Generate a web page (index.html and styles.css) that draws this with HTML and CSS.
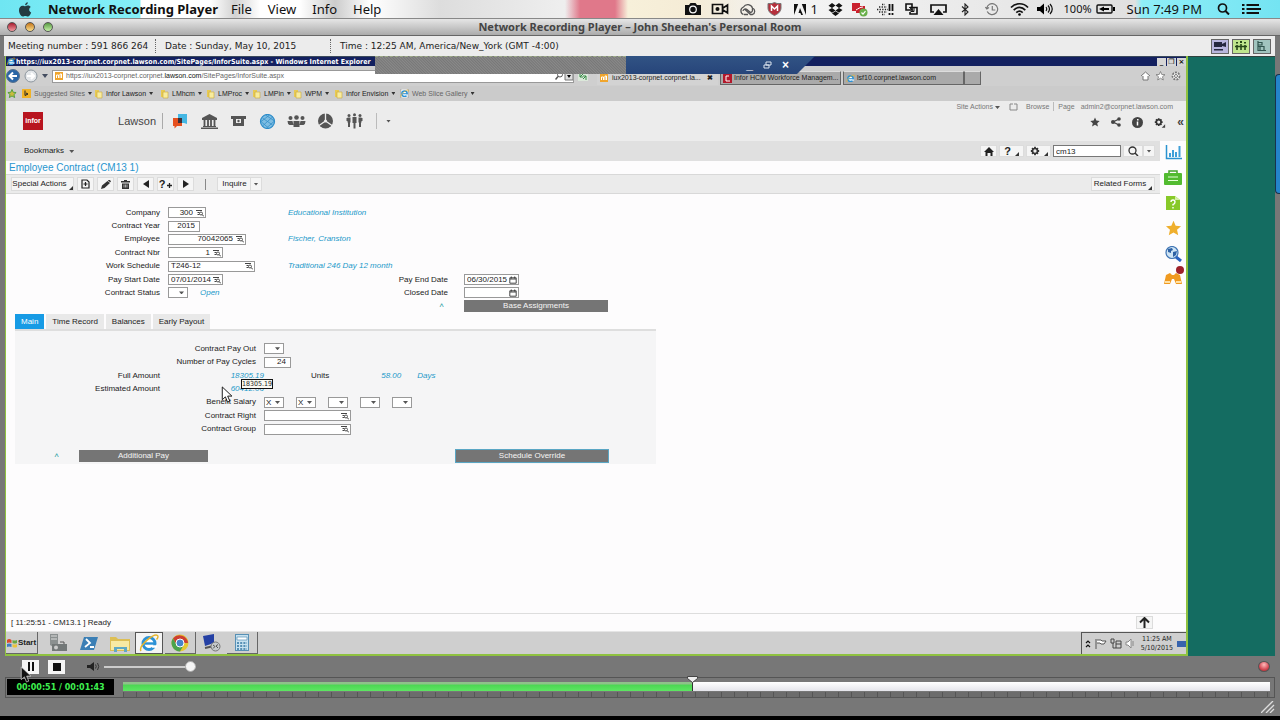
FILE: index.html
```html
<!DOCTYPE html>
<html lang="en">
<head>
<meta charset="utf-8">
<title>Network Recording Player</title>
<link rel="stylesheet" href="styles.css">
</head>
<body>
<svg class="sprite" aria-hidden="true">
  <symbol id="lookup" viewBox="0 0 8 8"><path d="M0 1.5h6M1.500 3.500h2M1.500 5.500h2" stroke="#444" fill="none"/><circle cx="5" cy="4.500" r="1.500" stroke="#333" fill="none" stroke-width=".8"/><path d="M6 5.500l2 2" stroke="#333"/></symbol>
  <symbol id="calendar" viewBox="0 0 8 8"><path d="M.8 1.800h6.400v5.400H.8zM2.300.5v2M5.700.5v2M1 3h6" stroke="#333" fill="none" stroke-width=".9"/></symbol>
  <symbol id="folder" viewBox="0 0 9 10"><path d="M1 1h4v7H1z" fill="#e8ca52"/><path d="M3 3h5v6H3z" fill="#f8ec9d" stroke="#c9a93a" stroke-width=".6"/></symbol>
  <symbol id="ie" viewBox="0 0 20 20"><circle cx="10" cy="10.500" r="6" fill="#fff" stroke="#2b91d6" stroke-width="3"/><path d="M5 10.500h11" stroke="#2b91d6" stroke-width="2.400"/><path d="M13 13.500h5" stroke="#fff" stroke-width="2.500"/><path d="M2 18C-1 13 15 0 18.500 2.500c1 1 0 3-1 4" fill="none" stroke="#e6b52c" stroke-width="1.500"/></symbol>
  <symbol id="star" viewBox="0 0 20 20"><path d="M10 1l2.700 6.200 6.700.6-5 4.500 1.500 6.700-5.900-3.500L4.100 19l1.500-6.700-5-4.500 6.700-.6z"/></symbol>
  <symbol id="gear" viewBox="0 0 12 12"><path d="M6 1v10M1 6h10M2.500 2.500l7 7M9.500 2.500l-7 7" stroke="#333" stroke-width="2.200"/><circle cx="6" cy="6" r="3" fill="#eee" stroke="#333" stroke-width="2"/></symbol>
  <symbol id="infor" viewBox="0 0 8 8"><rect width="8" height="8" fill="#f0a52c"/><path d="M1.500 6V3h2v3M5 6V2h1.500v4" stroke="#fff" fill="none"/></symbol>
  <symbol id="corner" viewBox="0 0 4 4"><path d="M4 0v4H0z" fill="#333"/></symbol>
  <symbol id="pointer" viewBox="0 0 12 18"><path d="M1 1v13.500l3.300-3 2.200 5.500 2.500-1-2.300-5.300h4.500z"/></symbol>
</svg>

<header class="menubar">
  <svg class="apple" viewBox="0 0 14 15"><path d="M9.800.3c.1 1.600-1.200 3-2.700 3C7 1.800 8.300.5 9.800.3zM7.200 4.300c.8 0 1.500-.7 2.800-.7 1.200 0 2.200.6 2.800 1.500-2.300 1.400-2 4.500.4 5.400-.7 2-1.900 4-3.400 4-1 0-1.300-.6-2.500-.6s-1.600.6-2.500.6C3 14.500 1 11.300 1 8.300c0-2.900 1.800-4.500 3.600-4.500 1.200 0 2 .5 2.600.5z" fill="#233b42"/></svg>
  <strong class="app-name">Network Recording Player</strong>
  <nav class="menus"><a href="#">File</a><a href="#">View</a><a href="#">Info</a><a href="#">Help</a></nav>
  <div class="tray">
    <span class="cell"><svg width="18" height="14" viewBox="0 0 18 14"><path d="M1 3h4l1.500-2h5L13 3h4v10H1z" fill="#111"/><circle cx="9" cy="7.500" r="3.300" fill="#111" stroke="#fff" stroke-width="1.200"/></svg></span>
    <span class="cell"><svg width="18" height="12" viewBox="0 0 18 12"><path d="M1.500 1.500h10v9h-10zM12 5l4.500-3v8L12 7" fill="none" stroke="#111" stroke-width="1.700"/><circle cx="6.500" cy="6" r="2" fill="#111"/></svg></span>
    <span class="cell"><svg width="17" height="13" viewBox="0 0 17 13"><path d="M4.500 11.500a4 4 0 010-7.500A5 5 0 0113.500 5a3.500 3.500 0 010 6.500h-2L6 6.500M5 11.500h4M4 8a2.500 2.500 0 014-1.500l3.500 3A2.500 2.500 0 0013 5.500" fill="none" stroke="#555" stroke-width="1.300"/></svg></span>
    <span class="cell"><svg width="15" height="14" viewBox="0 0 15 14"><path d="M1 1.500h4L7.500.5l2.500 1h4V6c0 4-4 6.500-6.500 7.500C5 12.500 1 10 1 6z" fill="#b5303c" stroke="#777"/><path d="M4.500 9V4l3 3 3-3v5" fill="none" stroke="#fff" stroke-width="1.500"/></svg></span>
    <span class="adobe"><svg width="12" height="11" viewBox="0 0 12 11"><path d="M0 0h4.200L0 11zM7.800 0H12v11zM6 4l3 7H7.200l-.8-2H4.500z" fill="#111"/></svg>1</span>
    <span class="cell small"><svg width="15" height="13" viewBox="0 0 15 13"><path d="M4 0l3.500 2.500L4 5 .5 2.800zM11 0L7.500 2.500 11 5l3.500-2.200zM.5 7L4 5l3.500 2.500L4 9.800zM14.500 7L11 5 7.500 7.500 11 9.800zM4 10.500l3.500-2.200 3.500 2.200L7.500 13z" fill="#111"/></svg></span>
    <span class="cell small"><svg width="16" height="15" viewBox="0 0 16 15"><path d="M0 1h8v8H0zM7 4h6v7H4V9z" fill="#c9202d"/><path d="M4 8c2-1 4-3 7-3" stroke="#fff" stroke-width="1" fill="none"/><circle cx="11.500" cy="10.500" r="4" fill="#69b04b"/><path d="M9.500 10.500l1.500 1.700 2.500-3" stroke="#fff" fill="none" stroke-width="1.200"/></svg></span>
    <span class="cell small"><svg width="17" height="13" viewBox="0 0 17 13"><path d="M0 6.500h11M2 4h8M5 1.500h3M2 9h8M5 11.500h3" stroke="#222" stroke-width="1.300" stroke-dasharray="1.300 1.300"/><path d="M12.500 1v7M15.500 1v7M12.500 10v2M15.500 10v2" stroke="#111" stroke-width="1.800"/></svg></span>
    <span class="cell"><svg width="13" height="12" viewBox="0 0 13 12"><path d="M1 1h6v6H1zM5 4.500h7V11H5V9" fill="none" stroke="#111" stroke-width="1.600"/><path d="M4 4l4.500 4M9 5v3.500H5.500" stroke="#111" fill="none"/></svg></span>
    <span class="cell"><svg width="17" height="13" viewBox="0 0 17 13"><path d="M4 9H1V2h15v7h-3" fill="none" stroke="#111" stroke-width="1.700"/><path d="M8.500 6l5 6h-10z" fill="#111"/></svg></span>
    <span class="cell"><svg width="8" height="13" viewBox="0 0 8 13"><path d="M1 3.500l6 5.500-3 3V1l3 3-6 5" fill="none" stroke="#222" stroke-width="1.100"/></svg></span>
    <span class="cell"><svg width="14" height="13" viewBox="0 0 14 13"><path d="M2.200 8.500a5.500 5.500 0 10-.5-3M.3 4l1.500 2L4 4.500M7.300 3v4h3" fill="none" stroke="#777" stroke-width="1.200"/></svg></span>
    <span class="cell"><svg width="19" height="14" viewBox="0 0 19 14"><path d="M1 5.500C5.500.5 13.500.5 18 5.500M3.700 8.200c3.500-3.700 8.100-3.700 11.600 0M6.300 10.700c2-2 4.400-2 6.400 0" fill="none" stroke="#111" stroke-width="1.700"/><circle cx="9.500" cy="12.500" r="1.300"/></svg></span>
    <span class="cell small"><svg width="16" height="12" viewBox="0 0 16 12"><path d="M0 4h3l4-3.500v11L3 8H0z"/><path d="M9 4q1.500 2 0 4M11 2.500q3 3.500 0 7M13 1q4.500 5 0 10" fill="none" stroke="#111" stroke-width="1.200"/></svg></span>
    <span class="percent">100%</span>
    <svg width="19" height="10" viewBox="0 0 19 10"><rect x="1" y="1" width="15" height="8" rx="1" fill="none" stroke="#111" stroke-width="1.400"/><path d="M3 5l5-2.500v1.500h5v2H8v1.500zM17 3h2v4h-2z"/></svg>
    <span class="clock">Sun 7:49 PM</span>
    <svg class="spot" width="13" height="12" viewBox="0 0 13 12"><circle cx="5.500" cy="5" r="4" fill="none" stroke="#111" stroke-width="1.700"/><path d="M8.500 8l3.500 3.500" stroke="#111" stroke-width="2"/></svg>
    <svg width="19" height="12" viewBox="0 0 19 12"><path d="M0 2h2.500M0 6h2.500M0 10h2.500M4.500 2H17M4.500 6H19M4.500 10H17" stroke="#111" stroke-width="2.200"/></svg>
  </div>
</header>

<main class="window">
  <div class="titlebar">
    <div class="lights"><button class="light red" aria-label="Close"></button><button class="light amber" aria-label="Minimize"></button><button class="light green" aria-label="Zoom"></button></div>
    <h1>Network Recording Player – John Sheehan's Personal Room</h1>
  </div>
  <div class="infobar">
    <span class="meeting">Meeting number : 591 866 264</span>
    <span class="date">Date : Sunday, May 10, 2015</span>
    <span class="time">Time : 12:25 AM, America/New_York (GMT -4:00)</span>
    <div class="views">
      <button class="lilac" aria-label="Video"><svg width="14" height="12" viewBox="0 0 14 12"><path d="M1 2h8v5H1zM9 4l4-2v5l-4-1zM1 9h9v1.500H1z" fill="#25273f"/></svg></button>
      <button class="lime" aria-label="Participants"><svg width="12" height="10" viewBox="0 0 12 10"><path d="M2 4v5M6 3v6M10 4v5M0 5.500h12" stroke="#264718" stroke-width="1.600"/><path d="M2 1v1.500M6 0v2M10 1v1.500" stroke="#264718" stroke-width="2"/></svg></button>
      <button class="aqua" aria-label="Chat"><svg width="10" height="10" viewBox="0 0 10 10"><path d="M1 0v9.500h8M1 1.500h4v2.500H1M1 5.500h6V9M3 9V6" fill="none" stroke="#31554f" stroke-width="1.200"/></svg></button>
    </div>
  </div>

  <section class="stage">
    <div class="remote">
      <div class="ie-title"><svg width="10" height="9"><use href="#ie"/></svg><span>https://iux2013-corpnet.corpnet.lawson.com/SitePages/InforSuite.aspx - Windows Internet Explorer</span>
        <div class="ie-buttons"><button>_</button><button>❐</button><button>×</button></div></div>
      <div class="ie-address">
        <svg class="nav-arrows" width="42" height="14" viewBox="0 0 42 14"><circle cx="7" cy="7" r="6.500" fill="#2a66a6" stroke="#59728e"/><path d="M11 7H4M7 3.500L3.500 7 7 10.500" stroke="#fff" stroke-width="2" fill="none"/><circle cx="25" cy="7" r="6" fill="#e3e6e9" stroke="#8d969e"/><path d="M21 7h7M25 4l3 3-3 3" stroke="#fff" stroke-width="2" fill="none"/><path d="M36 5h6l-3 4z" fill="#444d60"/></svg>
        <div class="address"><svg width="8" height="8"><use href="#infor"/></svg><span>https://iux2013-corpnet.corpnet.<b>lawson.com</b>/SitePages/InforSuite.aspx</span>
          <svg class="find" width="18" height="10" viewBox="0 0 18 10"><circle cx="5" cy="3.500" r="2.500" fill="none" stroke="#555"/><path d="M3 5.500L.5 8.500" stroke="#555" stroke-width="1.500"/><path d="M10 0h8v9h-8z" fill="#ddd" stroke="#777"/><path d="M12 4h4l-2 3z"/></svg></div>
        <svg class="reload" width="10" height="9" viewBox="0 0 10 9"><path d="M0 0h10v9H0z" fill="#dbe8da"/><path d="M2 1v4h3M2 5l3-3M8 8V4H5M8 4L5 7" stroke="#368a46" fill="none"/></svg>
        <div class="ie-tabs">
          <a class="ie-tab on" href="#"><svg width="8" height="8"><use href="#infor"/></svg><span>iux2013-corpnet.corpnet.la...</span><b>✖</b></a>
          <a class="ie-tab" href="#"><svg width="9" height="9" viewBox="0 0 9 9"><path d="M0 0h9v9H0z" fill="#b3182b"/><path d="M3 2v5h4M3 2h3" stroke="#fff" fill="none"/></svg><span>Infor HCM Workforce Managem...</span></a>
          <a class="ie-tab" href="#"><svg width="9" height="9"><use href="#ie"/></svg><span>lsf10.corpnet.lawson.com</span></a>
          <a class="ie-tab stub" href="#" aria-label="New tab"></a>
        </div>
        <svg class="ie-tools" width="40" height="10" viewBox="0 0 40 10"><path d="M0 5l4.500-4L9 5M2 5v4h5V5" fill="#fff" stroke="#777"/><path d="M19.500.5l1.300 3 3.200.2-2.500 2 .8 3.300-2.800-1.800L16.700 9l.8-3.300-2.500-2 3.200-.2z" fill="#fff" stroke="#777" stroke-width=".8"/><circle cx="35" cy="5" r="3.500" fill="#fff" stroke="#777" stroke-width="1.800" stroke-dasharray="2 1"/><circle cx="35" cy="5" r="1.500" fill="none" stroke="#777"/></svg>
      </div>
      <nav class="favorites">
        <svg width="10" height="9" viewBox="0 0 20 20" fill="#c8bb3d" stroke="#4a9c3a" stroke-width="2"><use href="#star"/></svg>
        <a class="wide faded" href="#"><svg width="9" height="9" viewBox="0 0 9 9"><path d="M0 0h9v9H0z" fill="#f0b226"/><path d="M3 1.500v5l3-1.500-2-1" stroke="#222" fill="none"/></svg>Suggested Sites<i></i></a>
        <a class="f2" href="#"><svg width="9" height="10"><use href="#folder"/></svg>Infor Lawson<i></i></a>
        <a class="f3" href="#"><svg width="9" height="10"><use href="#folder"/></svg>LMhcm<i></i></a>
        <a class="f3" href="#"><svg width="9" height="10"><use href="#folder"/></svg>LMProc<i></i></a>
        <a class="f4" href="#"><svg width="9" height="10"><use href="#folder"/></svg>LMPin<i></i></a>
        <a class="f4" href="#"><svg width="9" height="10"><use href="#folder"/></svg>WPM<i></i></a>
        <a class="f2" href="#"><svg width="9" height="10"><use href="#folder"/></svg>Infor Envision<i></i></a>
        <a class="faded" href="#"><svg width="9" height="9" viewBox="0 0 20 20"><path d="M2 0h16v20H2z" fill="#fff" stroke="#777"/><use href="#ie"/></svg>Web Slice Gallery<i></i></a>
      </nav>

      <div class="app-head">
        <div class="brand"><span class="logo">infor</span><span class="product">Lawson</span></div>
        <nav class="apps">
          <svg width="15" height="15" viewBox="0 0 15 15"><path d="M5 0h9v10l-3-1H5z" fill="#45b7e3"/><path d="M0 4h9v8H4l-2.500 2.500V12H0z" fill="#e6501e"/><path d="M5 4h4v5H5z" fill="#3d2f37"/></svg>
          <svg width="17" height="15" viewBox="0 0 17 15"><path d="M8.500 0L16 4v2H1V4zM2 12h13v1H2zM0 13.500h17V15H0z" fill="#555"/><path d="M3.500 6v6M7 6v6M10 6v6M13.500 6v6" stroke="#555" stroke-width="1.800"/></svg>
          <svg width="15" height="12" viewBox="0 0 15 12"><path d="M0 1h15v3h-2v7H2V4H0z" fill="#555"/><path d="M5 4h5v4H5z" fill="#eee"/><circle cx="7.500" cy="6" r="1.200" fill="#555"/></svg>
          <svg width="16" height="15" viewBox="0 0 16 15"><circle cx="8" cy="7.500" r="7" fill="#7ebde2" stroke="#2d8cc9" stroke-width="1.200"/><path d="M3 4l10 7M2 8l7 6M6 1l9 6M13 3L3 12M10 1L1 8M15 7l-8 7" stroke="#338fc9" stroke-width=".8"/></svg>
          <svg width="18" height="12" viewBox="0 0 18 12"><circle cx="3" cy="3" r="2"/><circle cx="9" cy="2.500" r="2.300"/><circle cx="15" cy="3" r="2"/><path d="M0 6h5l1 4H2q-2-1-2-4M6 6h6v6H6zM13 6h5q0 3-2 4h-4z"/></svg>
          <svg width="17" height="16" viewBox="0 0 17 16"><circle cx="8.500" cy="8" r="7.500"/><path d="M8.500 0v8M8.500 8L2 12.500M8.500 8l6.500 4.500" stroke="#eee" stroke-width="1.300"/><circle cx="8.500" cy="8" r="1.500" fill="#eee"/></svg>
          <svg width="16" height="16" viewBox="0 0 16 16"><circle cx="2.500" cy="2.500" r="1.500"/><circle cx="8" cy="1.700" r="1.500"/><circle cx="13.500" cy="2.500" r="1.500"/><path d="M1 4.500h3v5H3.500V14h-2V9.500H1zM6 4h4v6H9v5.500H7V10H6zM12 4.500h3v5h-.5V14h-2V9.500H12zM0 5h1v3H0zM15 5h1v3h-1z"/></svg>
        </nav>
        <i class="caret more"></i>
        <div class="head-right">
          <div class="site"><span>Site Actions <i class="caret"></i></span><svg width="9" height="8" viewBox="0 0 9 8"><path d="M4 1H1v6h7V4M5 1h3v3" fill="none" stroke="#888"/></svg><span class="ribbon">Browse</span><span class="ribbon">Page</span><span class="user">admin2@corpnet.lawson.com</span></div>
          <div class="tools">
            <svg width="10" height="10"><use href="#star"/></svg>
            <svg width="10" height="10" viewBox="0 0 10 10"><path d="M8 2L2 5l6 3" stroke="#444" stroke-width="1.300" fill="none"/><circle cx="8" cy="2" r="1.800"/><circle cx="2" cy="5" r="2"/><circle cx="8" cy="8" r="1.800"/></svg>
            <svg width="11" height="11" viewBox="0 0 11 11"><circle cx="5.500" cy="5.500" r="5.500"/><path d="M5.800 2v1.500M5.500 4.500v4" stroke="#fff" stroke-width="1.500"/></svg>
            <svg width="12" height="11" viewBox="0 0 14 12"><use href="#gear" width="11" height="11"/><path d="M13 8v4H9z"/></svg>
            <b>«</b>
          </div>
        </div>
      </div>

      <div class="workspace">
        <div class="page">
          <div class="bookmarks">
            <a href="#">Bookmarks <i class="caret"></i></a>
            <form class="search">
              <button type="button" class="btn" aria-label="Home"><svg width="10" height="9" viewBox="0 0 10 9"><path d="M5 0l5 5H8.500v4h-2V6h-3v3h-2V5H0z" fill="#222"/></svg></button>
              <button type="button" class="btn big" aria-label="Help"><b>?</b><svg width="4" height="4"><use href="#corner"/></svg></button>
              <button type="button" class="btn big" aria-label="Settings"><svg width="10" height="10"><use href="#gear"/></svg><svg width="4" height="4"><use href="#corner"/></svg></button>
              <input aria-label="Search" value="cm13">
              <button type="button" class="btn find-btn" aria-label="Find"><svg width="11" height="10" viewBox="0 0 11 10"><circle cx="4.500" cy="4.500" r="3.500" fill="none" stroke="#333" stroke-width="1.300"/><path d="M7 7l3 3" stroke="#333" stroke-width="1.500"/></svg></button><button type="button" class="btn drop" aria-label="Search options"><i class="caret"></i></button>
            </form>
          </div>
          <h2>Employee Contract (CM13 1)</h2>
          <div class="toolbar">
            <button class="btn text">Special Actions<svg width="4" height="4"><use href="#corner"/></svg></button>
            <button class="btn" aria-label="Add"><svg width="9" height="10" viewBox="0 0 9 10"><path d="M1 1h5l2 2v6H1z" fill="none" stroke="#222" stroke-width="1.200"/><path d="M4.500 3v4M2.500 5h4" stroke="#222" stroke-width="1.200"/></svg></button>
            <button class="btn" aria-label="Edit"><svg width="10" height="9" viewBox="0 0 10 9"><path d="M0 9l1-3.500L6.500 1l2.500 2L3.500 8zM7.500 0h1.500l1 1.500-.8.800L7 .8z" fill="#333"/></svg></button>
            <button class="btn" aria-label="Delete"><svg width="9" height="9" viewBox="0 0 9 9"><path d="M0 1h3V0h3v1h3v1.500H0zM1 3.500h7V9H1z" fill="#333"/><path d="M3 4.500v3M4.500 4.500v3M6 4.500v3" stroke="#ddd" stroke-width=".7"/></svg></button>
            <button class="btn" aria-label="Previous"><svg width="6" height="8" viewBox="0 0 6 8"><path d="M6 0v8L0 4z" fill="#222"/></svg></button>
            <button class="btn" aria-label="Inquire help"><b>?</b><svg width="5" height="5" viewBox="0 0 5 5"><path d="M2.500 0v5M0 2.500h5" stroke="#222" stroke-width="1.300"/></svg></button>
            <button class="btn" aria-label="Next"><svg width="6" height="8" viewBox="0 0 6 8"><path d="M0 0v8l6-4z" fill="#222"/></svg></button>
            <span class="rule"></span>
            <div class="split"><button class="btn inquire">Inquire</button><button class="btn drop" aria-label="Inquire options"><i class="caret"></i></button></div>
            <button class="btn text related">Related Forms<svg width="4" height="4"><use href="#corner"/></svg></button>
          </div>

          <div class="content">
            <form class="contract">
              <label for="company">Company</label><div class="field w38"><input id="company" class="num" value="300"><svg width="8" height="8"><use href="#lookup"/></svg></div><em>Educational Institution</em><i></i>
              <label for="year">Contract Year</label><div class="field w32"><input id="year" class="num" value="2015"></div><i></i><i></i>
              <label for="employee">Employee</label><div class="field w78"><input id="employee" class="num" value="70042065"><svg width="8" height="8"><use href="#lookup"/></svg></div><em>Fischer, Cranston</em><i></i>
              <label for="nbr">Contract Nbr</label><div class="field w54"><input id="nbr" class="num" value="1"><svg width="8" height="8"><use href="#lookup"/></svg></div><i></i><i></i>
              <label for="schedule">Work Schedule</label><div class="field w87"><input id="schedule" value="T246-12"><svg width="8" height="8"><use href="#lookup"/></svg></div><em>Traditional 246 Day 12 month</em><i></i>
              <label for="start">Pay Start Date</label><div class="field w54"><input id="start" value="07/01/2014"><svg width="8" height="8"><use href="#lookup"/></svg></div><label for="end">Pay End Date</label><div class="field w54 second"><input id="end" value="06/30/2015"><svg width="8" height="8"><use href="#calendar"/></svg></div>
              <label for="status">Contract Status</label><div class="row"><span class="pick"><select id="status"><option></option></select><i class="caret"></i></span><em>Open</em></div><label for="closed">Closed Date</label><div class="field w54 second"><input id="closed"><svg width="8" height="8"><use href="#calendar"/></svg></div>
              <i></i><i></i><span class="hat">˄</span><button type="button" class="action second">Base Assignments</button>
            </form>

            <nav class="tabs"><button class="on">Main</button><button>Time Record</button><button>Balances</button><button>Early Payout</button></nav>
            <form class="panel">
              <div class="grid">
                <i></i><label for="payout">Contract Pay Out</label><span class="pick"><select id="payout"><option></option></select><i class="caret"></i></span>
                <i></i><label for="cycles">Number of Pay Cycles</label><div class="field w26"><input id="cycles" class="num" value="24"></div>
                <span class="lab">Full Amount</span><em class="value">18305.19</em><div class="row units"><span>Units</span><em class="value">58.00</em><em>Days</em></div>
                <span class="lab">Estimated Amount</span><em class="value">60412.06</em><i></i>
                <i></i><label for="b1">Benefit Salary</label><div class="row"><span class="pick"><select id="b1"><option>X</option></select><i class="caret"></i></span><span class="pick"><select aria-label="Benefit salary 2"><option>X</option></select><i class="caret"></i></span><span class="pick"><select aria-label="Benefit salary 3"><option></option></select><i class="caret"></i></span><span class="pick"><select aria-label="Benefit salary 4"><option></option></select><i class="caret"></i></span><span class="pick"><select aria-label="Benefit salary 5"><option></option></select><i class="caret"></i></span></div>
                <i></i><label for="right">Contract Right</label><div class="field w87"><input id="right"><svg width="8" height="8"><use href="#lookup"/></svg></div>
                <i></i><label for="group">Contract Group</label><div class="field w87"><input id="group"><svg width="8" height="8"><use href="#lookup"/></svg></div>
              </div>
              <div class="actions"><span class="hat">˄</span><button type="button" class="action pay">Additional Pay</button><button type="button" class="action override">Schedule Override</button></div>
              <span class="tip">18305.19</span>
              <svg class="arrow" width="12" height="17" fill="#fff" stroke="#111"><use href="#pointer"/></svg>
            </form>
          </div>
        </div>
        <aside class="side">
          <svg width="17" height="15" viewBox="0 0 17 15"><path d="M1.500 0v13.500H17" fill="none" stroke="#2a92d0" stroke-width="1.500"/><path d="M5 12V8M8 12V5M11 12V7M14.500 12V1" stroke="#3f9fd8" stroke-width="2"/></svg>
          <svg width="18" height="15" viewBox="0 0 18 15"><path d="M5 4V1h8v3" fill="none" stroke="#43a32a" stroke-width="1.500"/><rect y="3" width="18" height="12" rx="1" fill="#52bb30"/><path d="M4 7h10M4 10.500h10" stroke="#e2ffd5"/></svg>
          <svg width="14" height="15" viewBox="0 0 14 15"><path d="M0 1h9l5 4v10H0z" fill="#88c929"/><path d="M9 1v4h5" fill="#d4f0a7"/><path d="M5 7q0-2 2-2t2 2-2 2.500v1M7 12v1.500" fill="none" stroke="#fff" stroke-width="1.400"/></svg>
          <svg width="17" height="16" viewBox="0 0 20 20" fill="#efaf2d"><use href="#star"/></svg>
          <svg width="17" height="16" viewBox="0 0 17 16"><circle cx="7" cy="6.500" r="6" fill="#cfe4f4" stroke="#3f75b4" stroke-width="1.200"/><path d="M3 3l4-1 1 2-2 1v2l-3-1zM8 6l4-1-1 4-3 2z" fill="#2d61a4"/><path d="M11 11l5 4" stroke="#2862bf" stroke-width="3"/></svg>
          <svg class="binoculars" width="22" height="19" viewBox="0 0 22 19"><path d="M2 18l2-9 4-2 2 2h2l2-2 4 2 2 9h-6l-2-5h-2l-2 5z" fill="#f09a20"/><path d="M3 16h5M14 16h5" stroke="#ffe1a5" stroke-width="2"/><circle cx="18" cy="4" r="4" fill="#9e2029"/></svg>
        </aside>
      </div>
      <div class="status"><span>[ 11:25:51 - CM13.1 ] Ready</span><button class="btn up" aria-label="Top"><svg width="11" height="11" viewBox="0 0 11 11"><path d="M5.500 11V1M1 5.500L5.500 1 10 5.500" fill="none" stroke="#222" stroke-width="2"/></svg></button></div>
      <div class="taskbar">
        <button class="start"><svg width="10" height="10" viewBox="0 0 10 10"><path d="M0 2q2-2 4.500 0v3Q2 4 0 5z" fill="#dc4a2c"/><path d="M5.500 2q2 1 4.500 0v3q-2 1-4.500 0z" fill="#69a843"/><path d="M0 6q2-1 4.500 0v3Q2 8 0 9z" fill="#417cc0"/><path d="M5.500 6q2 1 4.500 0v3q-2 1-4.500 0z" fill="#ecc33a"/></svg>Start</button>
        <button class="task" aria-label="Server Manager"><svg width="20" height="18" viewBox="0 0 20 18"><path d="M2 0h8v12l-3 2-5-3z" fill="#8b9090"/><path d="M3 2h6M3 5h6" stroke="#ddd"/><path d="M4 10h15v7H4z" fill="#737878"/><circle cx="8" cy="13.500" r="2" fill="#ccc"/><path d="M12 8h4v2" stroke="#555" fill="none"/></svg></button>
        <button class="task" aria-label="PowerShell"><svg width="18" height="15" viewBox="0 0 18 15"><path d="M4 1h14l-4 13H0z" fill="#3b7fb5"/><path d="M6 3l4 4-5 4M10 11h4" fill="none" stroke="#fff" stroke-width="1.800"/></svg></button>
        <button class="task" aria-label="Explorer"><svg width="20" height="17" viewBox="0 0 20 17"><path d="M0 2h6l2 2h12v12H0z" fill="#ddbf55"/><path d="M1 6h18v9H1z" fill="#f7eaa3"/><path d="M4 17v-5h13v5h-3v-3H7v3z" fill="#5fa9c4"/></svg></button>
        <button class="task active" aria-label="Internet Explorer"><svg width="20" height="20"><use href="#ie"/></svg></button>
        <button class="task raised" aria-label="Chrome"><svg width="18" height="18" viewBox="0 0 18 18"><circle cx="9" cy="9" r="8.500" fill="#e6c832"/><path d="M9 9H17A8.500 8.500 0 002 4.300L5.500 11z" fill="#ce3f32"/><path d="M2 4.300A8.500 8.500 0 009 17.500l4-7-7 1z" fill="#4ba34b"/><circle cx="9" cy="9" r="4" fill="#4784c8" stroke="#fff"/></svg></button>
        <button class="task" aria-label="Remote Desktop"><svg width="19" height="18" viewBox="0 0 19 18"><path d="M1 2l11-2v9L3 12z" fill="#2440a4"/><path d="M3 14l9-2" stroke="#555" stroke-width="2"/><circle cx="13.500" cy="12.500" r="4.500" fill="#c6cacc" stroke="#777"/><path d="M11 11l2 1.500-2 2M16 10.500L14 12l2 2" stroke="#555" fill="none"/></svg></button>
        <button class="task raised" aria-label="Calculator"><svg width="14" height="17" viewBox="0 0 14 17"><rect x=".5" y=".5" width="13" height="16" fill="#c7e1ef" stroke="#5790b5"/><path d="M2 3h10v3H2z" fill="#fff" stroke="#5790b5" stroke-width=".7"/><path d="M2 9h10M2 12h10M2 15h10" stroke="#5790b5" stroke-width="1.800" stroke-dasharray="2 1.200"/></svg></button>
        <div class="systray"><svg width="52" height="12" viewBox="0 0 52 12"><path d="M1 5l2-2 2 2M1 9l2-2 2 2" fill="none" stroke="#111" stroke-width="1.200"/><path d="M11 11V1M12 2h4l1 1h4l-2 3h-3l-1-1h-3" fill="#fff" stroke="#555"/><path d="M26 1v4h3V1zM28 5v5h3M31 3h5v7h-5zM31 6h5" fill="none" stroke="#444"/><path d="M41 4h2l3-3v9l-3-3h-2zM48 3v5" fill="#fff" stroke="#888"/></svg><time>11:25 AM<br>5/10/2015</time><i></i></div>
      </div>
      <div class="float"><span class="noise"></span><span class="float-blue"><b>_</b><svg width="9" height="8" viewBox="0 0 9 8"><path d="M3 1h5v3H3zM1 4h5v3H1z" fill="#23406f" stroke="#dde6f2"/></svg><b>×</b></span></div>
    </div>
    <div class="desktop"></div>
    <span class="edge"></span>
  </section>

  <div class="controls">
    <button class="ctl" aria-label="Pause"><svg width="6" height="9" viewBox="0 0 6 9"><path d="M1 0v9M5 0v9" stroke="#111" stroke-width="2"/></svg></button>
    <button class="ctl" aria-label="Stop"><svg width="8" height="8"><rect width="8" height="8" fill="#111"/></svg></button>
    <svg class="speaker" width="13" height="9" viewBox="0 0 13 9"><path d="M0 3h3l4-3v9L3 6H0z" fill="#222"/><path d="M8.500 2.500q1.500 2 0 4M10.500 1q2.500 3.500 0 7" fill="none" stroke="#333"/></svg>
    <input class="volume" type="range" aria-label="Volume" min="0" max="100" value="100">
    <span class="record"></span>
    <svg class="arrow2" width="12" height="17" fill="#111" stroke="#ddd" stroke-width=".7"><use href="#pointer"/></svg>
  </div>
  <div class="timeline">
    <output>00:00:51 / 00:01:43</output>
    <div class="track-wrap"><div class="track"><div class="played" style="width:49.7%"><svg width="11" height="7" viewBox="0 0 11 7"><path d="M.5.5h10v2l-5 4-5-4z" fill="#eee" stroke="#444"/></svg></div></div><div class="ticks"></div></div>
  </div>
  <footer class="foot"><svg width="14" height="12" viewBox="0 0 14 12"><path d="M0 12L12 0M5 12l8-8M9 12l4-4" stroke="#ddd" stroke-width="1.300"/></svg></footer>
</main>
</body>
</html>
```
FILE: styles.css
```css
* { box-sizing: border-box; }
body { margin: 0; min-height: 100vh; display: flex; flex-direction: column; background: #000; padding-bottom: 4px; font: 8px/10px "Liberation Sans", Arial, sans-serif; color: #222; }
button, input, select { font: inherit; color: inherit; margin: 0; padding: 0; border: 0; border-radius: 0; }
a { color: inherit; text-decoration: none; }
svg { flex: none; display: block; }
i { font-style: normal; }
.sprite { position: absolute; width: 0; height: 0; }
.caret { display: inline-block; flex: none; width: 5px; height: 3px; background: #555; clip-path: polygon(0 0, 100% 0, 50% 100%); }

/* System menu bar */
.menubar { height: 18px; display: flex; align-items: center; padding: 0 19px 0 18px; font: 13px/18px "Noto Sans", sans-serif; color: #111; background: linear-gradient(90deg, #6fe6f2 0, #85f0f8 140px, transparent 141px), linear-gradient(270deg, #74e4f2 0, #8feef8 138px, transparent 145px), linear-gradient(90deg, transparent 565px, #e0788a 580px, #e0788a 615px, #f7f0da 628px, #f5ecd6 690px, transparent 780px), linear-gradient(90deg, #fff 0, #fff 210px, #d2d2d2 235px, #fff 260px, #fff 300px, #ccc 335px, #fff 370px, #ddd 440px, #eee 560px, #f4f4f4 800px, #d8d8d8); }
.apple { width: 14px; height: 15px; }
.app-name { margin-left: 16px; width: 183px; white-space: nowrap; }
.menus { display: flex; gap: 16px; }
.tray { margin-left: auto; display: flex; align-items: center; }
.cell { width: 27px; display: flex; justify-content: center; }
.cell.small { width: 25px; }
.adobe { width: 35px; display: flex; align-items: center; gap: 5px; padding-left: 6px; }
.percent { font-size: 11px; margin: 0 4px 0 6px; }
.clock { margin: 0 15px 0 12px; }
.spot { margin-right: 12px; }

/* Player window */
.window { flex: 1; display: flex; flex-direction: column; background: #777; }
.titlebar { height: 18px; display: grid; grid-template-columns: 60px 1fr 60px; align-items: center; background: linear-gradient(#e6e6e6, #ababab); border-top: 1px solid #888; border-bottom: 1px solid #666; }
.lights { display: flex; gap: 8px; padding-left: 7px; }
.light { width: 10px; height: 10px; border-radius: 50%; border: 1px solid #555; }
.red { background: linear-gradient(#a81c2e, #f39aa0); }
.amber { background: linear-gradient(#c5761a, #fbe08f); }
.green { background: linear-gradient(#579a42, #c6f1a8); }
h1 { margin: 0; text-align: center; font: bold 11px/16px "Noto Sans", sans-serif; color: #444; white-space: nowrap; }
.infobar { height: 20px; margin: 0 5px 0 4px; display: flex; align-items: center; background: #ececec; font: 9px/18px "DejaVu Sans", sans-serif; color: #222; }
.infobar > span { white-space: nowrap; line-height: 14px; }
.meeting { width: 152px; padding-left: 4px; border-right: 1px dotted #666; }
.date { width: 175px; padding-left: 9px; border-right: 1px dotted #666; }
.time { padding-left: 9px; }
.views { margin-left: auto; display: flex; gap: 3px; padding-right: 4px; }
.views button { width: 18px; height: 15px; border: 1px solid #666; display: flex; align-items: center; justify-content: center; }
.lilac { background: #b9b6de; } .lime { background: #bfe58d; } .aqua { background: #a1c4bf; }

.stage { flex: 1; display: flex; position: relative; padding: 0 5px; }
.remote { flex: 1; min-width: 0; display: flex; flex-direction: column; position: relative; border: solid #8fc240; border-width: 0 2px 2px 1px; background: #fdfcfd; }
.desktop { width: 87px; background: #146c61; border-top: 1px solid #30433f; }
.edge { position: absolute; right: 0; top: 18px; width: 5px; height: 120px; background: #2484cc; border: 1px solid #17334d; border-right: 0; border-radius: 4px 0 0 4px; }

/* Browser chrome */
.ie-title { height: 10px; display: flex; align-items: center; background: #13205f; color: #fff; font: bold 7px/10px "DejaVu Sans Condensed", "DejaVu Sans", sans-serif; white-space: nowrap; border-top: 1px solid #3b4a5c; }
.ie-buttons { margin-left: auto; display: flex; gap: 1px; }
.ie-buttons button { width: 9px; height: 8px; background: #d6d6d6; color: #111; font: bold 7px/6px "DejaVu Sans", sans-serif; }
.ie-address { height: 20px; display: flex; align-items: center; background: #cfcfcf; font: 7px/10px "Liberation Sans", sans-serif; }
.address { margin-left: 4px; width: 522px; height: 13px; display: flex; align-items: center; gap: 3px; padding-left: 2px; background: #fff; border: 1px solid #999; color: #666; white-space: nowrap; }
.address b { font-weight: normal; color: #111; }
.find { margin-left: auto; }
.reload { margin: 0 9px 0 4px; }
.ie-tabs { display: flex; gap: 2px; align-self: flex-end; min-width: 0; padding-bottom: 1px; }
.ie-tab { width: 121px; height: 14px; display: flex; align-items: center; gap: 2px; padding-left: 2px; background: #aaa; border: 1px solid #666; border-top-color: #ddd; white-space: nowrap; }
.ie-tab span { flex: 1; }
.ie-tab.on { background: #d3d3d3; border-color: #d3d3d3; padding-right: 4px; gap: 4px; }
.ie-tab.stub { width: 17px; margin-left: -2px; }
.ie-tools { margin: 0 5px 0 auto; }
.favorites { height: 15px; display: flex; align-items: center; padding-left: 1px; background: #cbcbcb; font: 7px/10px "Liberation Sans", sans-serif; white-space: nowrap; }
.favorites a { display: flex; align-items: center; gap: 3px; }
.favorites a i { width: 4px; height: 3px; background: #333; clip-path: polygon(0 0, 100% 0, 50% 100%); }
.favorites > svg { margin-right: 5px; }
.faded { color: #666; }
.wide { width: 72px; } .f2 { width: 66px; } .f3 { width: 46px; } .f4 { width: 41px; }

/* Portal header */
.app-head { height: 40px; display: flex; align-items: center; background: #ececec; }
.brand { display: flex; align-items: center; justify-content: space-between; width: 157px; height: 16px; padding: 0 6px 0 17px; border-right: 1px solid #aaa; }
.logo { width: 20px; height: 18px; background: #b8141f; color: #fff; font: bold 7px/17px "Liberation Sans", sans-serif; text-align: center; }
.product { font-size: 11px; line-height: 16px; color: #444; }
.apps { display: flex; align-items: center; width: 214px; height: 16px; padding-left: 3px; border-right: 1px solid #bbb; fill: #555; }
.apps svg { width: 29px; }
.more { margin-left: 9px; }
.head-right { margin-left: auto; align-self: stretch; }
.site { display: flex; align-items: center; height: 11px; padding-right: 13px; color: #777; font-size: 7px; line-height: 9px; white-space: nowrap; }
.site svg { margin: 0 4px 0 9px; }
.ribbon { padding: 0 4px; }
.ribbon + .ribbon { border-left: 1px solid #bbb; }
.user { margin-left: 2px; }
.tools { display: flex; align-items: center; justify-content: flex-end; gap: 11px; padding: 4px 2px 0 0; fill: #444; }
.tools b { font-size: 12px; line-height: 12px; color: #444; }

.workspace { flex: 1; display: flex; min-height: 0; }
.page { flex: 1; min-width: 0; }
.side { width: 26px; display: flex; flex-direction: column; align-items: center; gap: 10px; padding-top: 4px; }
.binoculars { margin-top: -6px; }
.bookmarks { height: 20px; display: flex; align-items: center; justify-content: space-between; padding: 0 5px 0 18px; background: #e0e0e0; }
.bookmarks a .caret { margin-left: 3px; }
.search { display: flex; gap: 2px; }
.search input { width: 68px; height: 12px; border: 1px solid #777; background: #fff; padding: 0 2px; }
.btn { width: 17px; height: 12px; display: flex; align-items: center; justify-content: center; gap: 2px; background: #f5f5f5; border: 1px solid #dcdcdc; }
.btn b { font-size: 11px; line-height: 10px; }
.btn > svg + svg, .btn > b + svg, .text svg { align-self: flex-end; }
.toolbar .btn svg:last-child:not(:only-child) { margin-bottom: 2px; }
.big { width: 25px; gap: 4px; }
.find-btn { width: 20px; }
.btn.drop { width: 12px; margin-left: -2px; }
h2 { margin: 0; padding-left: 3px; font-size: 10px; line-height: 13px; font-weight: normal; color: #2796cf; }
.toolbar { height: 20px; display: flex; align-items: center; gap: 3px; padding: 0 5px; background: #ebebeb; border: solid #d8d8d8; border-width: 1px 0; }
.toolbar .btn { height: 14px; }
.toolbar .btn.text { width: 63px; }
.toolbar .btn.related { margin-left: auto; width: 64px; }
.rule { width: 1px; height: 11px; background: #888; margin: 0 8px; }
.split { display: flex; }
.toolbar .inquire { width: 35px; }

/* Contract form */
.content { padding: 12px 9px 0; }
.contract { display: grid; grid-template-columns: 145px 112px 160px 160px; grid-template-rows: repeat(8, 1fr); column-gap: 8px; height: 107px; align-items: center; }
.contract label { text-align: right; }
.contract label, .grid label, .grid .lab { white-space: nowrap; }
em { color: #2299c9; white-space: nowrap; }
.field { display: flex; align-items: center; height: 11px; background: #fff; border: 1px solid #999; padding: 0 1px; }
.field input { flex: 1; min-width: 0; height: 9px; background: none; padding: 0 1px; }
.field .num { text-align: right; padding-right: 3px; }
.w26 { width: 27px; } .w32 { width: 32px; } .w38 { width: 38px; } .w54 { width: 55px; } .w78 { width: 78px; } .w87 { width: 87px; }
.second { margin-left: 8px; }
.row { display: flex; align-items: center; gap: 12px; }
.pick { display: grid; width: 20px; height: 11px; align-items: center; background: #fff; border: 1px solid #999; }
.pick select { grid-area: 1 / 1; appearance: none; background: none; width: 100%; height: 9px; padding: 0 1px; }
.pick .caret { grid-area: 1 / 1; justify-self: end; margin-right: 3px; pointer-events: none; }
.hat { color: #2299a0; text-align: right; padding-right: 4px; }
.action { height: 12px; background: #757575; color: #f5f5f5; text-align: center; width: 144px; }

.tabs { display: flex; gap: 2px; margin-top: 1px; }
.tabs button { height: 15px; padding: 0 6px; background: #e9e9e9; }
.tabs .on { background: #179be5; color: #fff; }
.panel { position: relative; width: 641px; background: #f5f5f6; border-top: 2px solid #dedede; padding: 11px 0 1px; }
.grid { display: grid; grid-template-columns: 145px 104px 1fr; grid-template-rows: repeat(7, 1fr); height: 94px; align-items: center; }
.grid label { text-align: right; padding-right: 8px; }
.lab, .value { text-align: right; }
.units { padding-left: 47px; gap: 16px; }
.units .value { width: 56px; }
.actions { display: flex; align-items: center; margin-top: 13px; }
.actions .hat { width: 48px; }
.pay { width: 129px; margin-left: 16px; }
.override { width: 154px; height: 14px; margin-left: 247px; border: 1px solid #5aa6c4; }
.tip { position: absolute; left: 226px; top: 48px; border: 1px solid #111; background: #fbfbf3; font: 7px/8px "DejaVu Sans Condensed", sans-serif; }
.arrow { position: absolute; left: 206px; top: 55px; }

.status { height: 18px; display: flex; align-items: center; justify-content: space-between; padding: 0 33px 0 5px; border-top: 1px solid #ddd; }
.up { height: 13px; }
.taskbar { height: 23px; display: flex; align-items: stretch; background: #cfcfcf; border-top: 1px solid #e5e5e5; }
.start { width: 32px; display: flex; align-items: center; justify-content: center; gap: 1px; font-weight: bold; background: #cfcfcf; border: solid #666; border-width: 0 1px 1px 0; }
.task { width: 31px; display: flex; align-items: center; justify-content: center; background: none; }
.start + .task { margin-left: 4px; }
.active { background: #f4f4f4; border: 1px solid #555; width: 28px; margin-right: 2px; }
.raised { border: solid #666; border-width: 0 1px 1px 0; }
.systray { margin-left: auto; display: flex; align-items: center; gap: 4px; padding-left: 3px; border: solid #555; border-width: 1px 0 0 1px; }
.systray time { text-align: center; font: 7px/9px "DejaVu Sans Condensed", sans-serif; }
.systray i { width: 9px; height: 6px; background: #3763ad; }

/* Floating session bar above the shared browser */
.float { position: absolute; left: 369px; top: 0; display: flex; height: 18px; }
.noise { width: 251px; background: repeating-linear-gradient(45deg, #777 0, #8a8a8a 1px, #777 2px); border-top: 1px dashed #9cab86; }
.float-blue { width: 189px; display: flex; align-items: center; justify-content: flex-end; gap: 10px; padding-right: 26px; color: #fff; background: linear-gradient(#315384, #27457a); clip-path: polygon(0 0, 100% 0, calc(100% - 18px) 100%, 0 100%); }
.float-blue b { font: bold 12px/16px "Liberation Sans", sans-serif; }

/* Playback */
.controls { height: 21px; display: flex; align-items: center; padding: 0 10px 0 22px; position: relative; }
.ctl { width: 17px; height: 14px; display: flex; align-items: center; justify-content: center; background: #f5f5f5; margin-right: 9px; }
.speaker { margin: 0 4px 0 13px; }
.volume { appearance: none; width: 92px; height: 11px; background: linear-gradient(#ccc, #ccc) center / 100% 2px no-repeat; }
.volume::-webkit-slider-thumb { appearance: none; width: 11px; height: 11px; border-radius: 50%; background: #f5f5f5; border: 1px solid #aaa; }
.record { margin-left: auto; width: 12px; height: 11px; border-radius: 50%; border: 1px solid #555; background: radial-gradient(circle at 50% 30%, #fbb, #d44a55 60%, #922); }
.arrow2 { position: absolute; left: 20px; top: 10px; }
.timeline { height: 21px; display: flex; margin: 0 5px; border: 1px solid #555; }
output { width: 107px; margin: 1px 9px 2px 1px; background: #000; color: #3ff050; text-align: center; font: bold 8px/17px "DejaVu Sans", sans-serif; }
.track-wrap { flex: 1; padding: 4px 4px 0 0; }
.track { height: 9px; background: linear-gradient(#fff, #e4e4ea); }
.played { height: 9px; background: linear-gradient(#8fc18a 0 2px, #4cd653 3px, #5de662); border-right: 1px solid #333; position: relative; }
.played svg { position: absolute; right: -6px; top: -6px; }
.ticks { height: 5px; margin-top: 1px; background: repeating-linear-gradient(90deg, #555 0 1px, #6c6c6c 1px 13px); }
.foot { height: 18px; display: flex; justify-content: flex-end; align-items: center; padding-right: 5px; }
```
